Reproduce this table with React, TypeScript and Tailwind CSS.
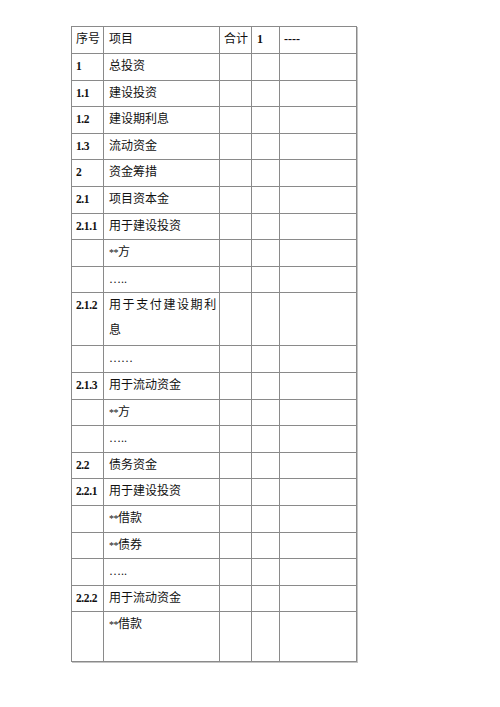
import React from "react";

type Row = { no: string; item: string; h?: string; wide?: boolean };

const rows: Row[] = [
  { no: "1", item: "总投资" },
  { no: "1.1", item: "建设投资" },
  { no: "1.2", item: "建设期利息" },
  { no: "1.3", item: "流动资金" },
  { no: "2", item: "资金筹措" },
  { no: "2.1", item: "项目资本金" },
  { no: "2.1.1", item: "用于建设投资" },
  { no: "", item: "**方" },
  { no: "", item: "….." },
  { no: "2.1.2", item: "用于支付建设期利息", h: "h-[53px]", wide: true },
  { no: "", item: "……" },
  { no: "2.1.3", item: "用于流动资金" },
  { no: "", item: "**方" },
  { no: "", item: "….." },
  { no: "2.2", item: "债务资金" },
  { no: "2.2.1", item: "用于建设投资" },
  { no: "", item: "**借款" },
  { no: "", item: "**债券" },
  { no: "", item: "….." },
  { no: "2.2.2", item: "用于流动资金" },
  { no: "", item: "**借款", h: "h-[50px]" },
];

const cell = "border border-[#8a8a8a] px-[4px] align-top leading-[25px] overflow-hidden";

function Item({ text, wide }: { text: string; wide?: boolean }) {
  if (wide) {
    return (
      <span className="block tracking-[1.6px]">
        用于支付建设期利
        <br />息
      </span>
    );
  }
  if (text.startsWith("**")) {
    return (
      <span>
        <span className="text-[10px] tracking-[-0.5px]">**</span>
        {text.slice(2)}
      </span>
    );
  }
  return <span>{text}</span>;
}

export default function App() {
  return (
    <div
      className="w-[500px] h-[707px] bg-white pl-[71px] pt-[26px] text-[#111]"
      style={{ fontFamily: '"Liberation Serif", "Noto Sans CJK SC", serif' }}
    >
      <table className="table-fixed w-[285px] border-collapse text-[12px] shadow-[1px_1px_0_#c4c4c4]">
        <colgroup>
          <col className="w-[32px]" />
          <col className="w-[116px]" />
          <col className="w-[32px]" />
          <col className="w-[28px]" />
          <col className="w-[77px]" />
        </colgroup>
        <tbody>
          <tr className="h-[27px]">
            <td className={cell + " whitespace-nowrap"}>序号</td>
            <td className={cell + " pl-[5px]"}>项目</td>
            <td className={cell + " whitespace-nowrap"}>合计</td>
            <td className={cell + " pl-[5px] font-bold"}>1</td>
            <td className={cell + " font-bold"}>----</td>
          </tr>
          {rows.map((r, i) => (
            <tr key={i} className={r.h ?? "h-[26.6px]"}>
              <td className={cell + " font-bold text-[11.5px] tracking-[-0.4px] whitespace-nowrap"}>
                {r.no}
              </td>
              <td className={cell + " pl-[5px] whitespace-nowrap"}>
                <Item text={r.item} wide={r.wide} />
              </td>
              <td className={cell}></td>
              <td className={cell}></td>
              <td className={cell}></td>
            </tr>
          ))}
        </tbody>
      </table>
    </div>
  );
}
